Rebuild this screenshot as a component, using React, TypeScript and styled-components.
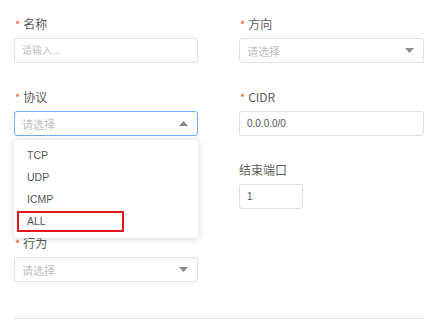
import styled, { createGlobalStyle } from "styled-components";

const GlobalStyle = createGlobalStyle`
  body {
    margin: 0;
    background: #fff;
    font-family: "Noto Sans CJK SC", "Liberation Sans", sans-serif;
  }
`;

const protocols = ["TCP", "UDP", "ICMP", "ALL"];

const Caret = ({ up }: { up?: boolean }) => (
  <svg width="9" height="5" viewBox="0 0 9 5">
    <path d={up ? "M0 5 L4.5 0 L9 5 Z" : "M0 0 L9 0 L4.5 5 Z"} fill="#8a8a8a" />
  </svg>
);

const App = () => {
  return (
    <>
      <GlobalStyle />
      <Page>
        <FormGrid>
          <Field>
            <Label required>名称</Label>
            <Input placeholder="请输入..." />
          </Field>
          <Field>
            <Label required>方向</Label>
            <SelectBox>
              <Placeholder>请选择</Placeholder>
              <Caret />
            </SelectBox>
          </Field>
          <Field>
            <Label required>协议</Label>
            <SelectWrap>
              <SelectBox focused>
                <Placeholder>请选择</Placeholder>
                <Caret up />
              </SelectBox>
              <Dropdown>
                {protocols.map((p) => (
                  <Option key={p}>{p === "ALL" ? <Marked>{p}</Marked> : p}</Option>
                ))}
              </Dropdown>
            </SelectWrap>
          </Field>
          <Field>
            <Label required>CIDR</Label>
            <Input defaultValue="0.0.0.0/0" />
          </Field>
          {/* start port sits under the open dropdown */}
          <Field>
            <Label>&nbsp;</Label>
            <Input small />
          </Field>
          <Field>
            <Label>结束端口</Label>
            <Input small defaultValue="1" />
          </Field>
          <Field>
            <Label required>行为</Label>
            <SelectBox>
              <Placeholder>请选择</Placeholder>
              <Caret />
            </SelectBox>
          </Field>
        </FormGrid>
        <Divider />
      </Page>
    </>
  );
};

const Page = styled.div`
  padding: 16px 11px 0 14px;
  width: 435px;
  height: 326px;
  box-sizing: border-box;
  overflow: hidden;
`;
const FormGrid = styled.div`
  display: grid;
  grid-template-columns: 184px 185px;
  column-gap: 41px;
  row-gap: 26px;
`;
const Field = styled.div`
  display: flex;
  flex-direction: column;
  align-items: flex-start;
`;
const Label = styled.div<{ required?: boolean }>`
  font-size: 12px;
  line-height: 16px;
  color: #5c5c5c;
  margin-bottom: 6px;
  &::before {
    content: ${(p) => (p.required ? '"*"' : '""')};
    color: #f5502b;
    margin-right: ${(p) => (p.required ? "3px" : "0")};
    margin-left: ${(p) => (p.required ? "1px" : "0")};
    font-size: 11px;
  }
`;
const Input = styled.input<{ small?: boolean }>`
  box-sizing: border-box;
  width: ${(p) => (p.small ? "64px" : "100%")};
  height: 25px;
  border: 1px solid #dcdfe6;
  border-radius: 3px;
  padding: 0 7px;
  font-family: "Liberation Sans", "Noto Sans CJK SC", sans-serif;
  font-size: 10px;
  color: #555;
  outline: none;
  &::placeholder {
    color: #c0c0c0;
    font-family: "Noto Sans CJK SC", sans-serif;
  }
`;
const SelectWrap = styled.div`
  position: relative;
  width: 100%;
`;
const SelectBox = styled.div<{ focused?: boolean }>`
  box-sizing: border-box;
  width: 100%;
  height: 25px;
  border: 1px solid ${(p) => (p.focused ? "#6fb0f7" : "#dcdfe6")};
  border-radius: 3px;
  padding: 0 9px 0 7px;
  display: flex;
  align-items: center;
  justify-content: space-between;
`;
const Placeholder = styled.span`
  font-size: 11px;
  color: #c0c0c0;
`;
const Dropdown = styled.div`
  position: absolute;
  top: calc(100% + 4px);
  left: 0;
  width: 100%;
  box-sizing: border-box;
  padding: 4px 0 6px;
  background: #fff;
  border-radius: 4px;
  box-shadow: 0 1px 8px rgba(0, 0, 0, 0.16);
  z-index: 2;
`;
const Option = styled.div`
  height: 22px;
  display: flex;
  align-items: center;
  padding-left: 13px;
  font-family: "Liberation Sans", sans-serif;
  font-size: 10.5px;
  color: #555;
`;
const Marked = styled.span`
  box-sizing: border-box;
  width: 107px;
  height: 21px;
  margin-left: -10px;
  padding-left: 8px;
  display: flex;
  align-items: center;
  border: 2px solid #e5161b;
`;
const Divider = styled.div`
  margin-top: 36px;
  height: 1px;
  background: #e4e4e4;
`;

export default App;
